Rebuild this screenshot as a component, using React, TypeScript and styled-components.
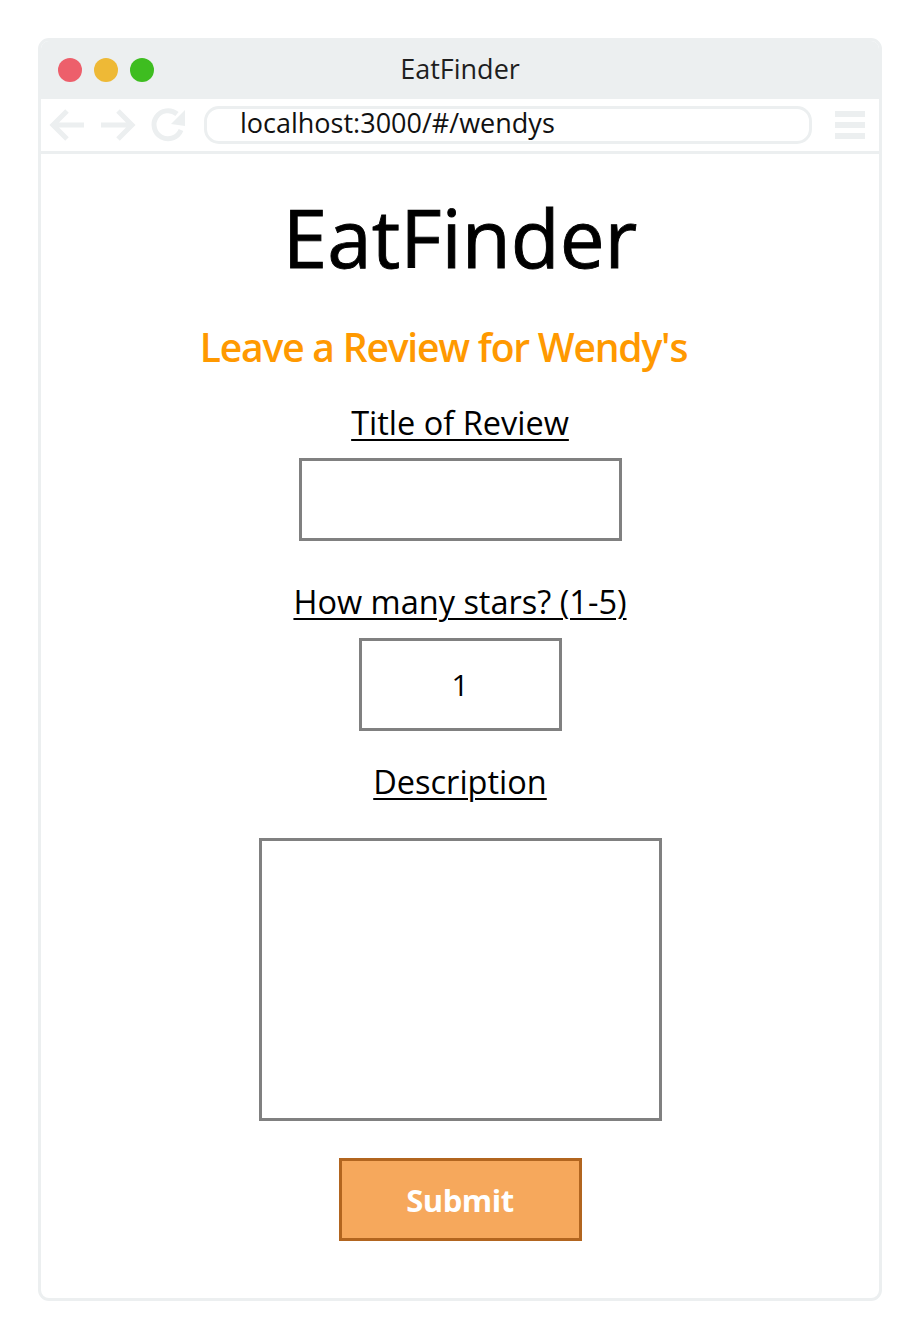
import React from "react";
import styled, { createGlobalStyle } from "styled-components";

const GlobalStyle = createGlobalStyle`
  html, body { margin: 0; padding: 0; background: #ffffff; }
  body { font-family: "Open Sans", "Noto Sans", sans-serif; }
  * { box-sizing: border-box; }
`;

const Page = styled.div`
  padding: 38px 39px 40px 38px;
`;

const Window = styled.div`
  width: 844px;
  height: 1263px;
  border: 3px solid #eceff0;
  border-radius: 11px;
  overflow: hidden;
  display: flex;
  flex-direction: column;
  background: #ffffff;
`;

const TitleBar = styled.div`
  position: relative;
  height: 58px;
  background: #eceff0;
  display: flex;
  align-items: center;
  padding-left: 17px;
  gap: 12px;
`;

const Dot = styled.span<{ $color: string }>`
  width: 24px;
  height: 24px;
  border-radius: 50%;
  background: ${(p) => p.$color};
`;

const WindowTitle = styled.div`
  position: absolute;
  left: 0;
  right: 0;
  top: 0;
  bottom: 4px;
  display: flex;
  align-items: center;
  justify-content: center;
  font-size: 27px;
  color: #1e1e1e;
`;

const Toolbar = styled.div`
  height: 55px;
  border-bottom: 3px solid #eceff0;
  display: flex;
  align-items: center;
  padding-left: 8px;
  padding-right: 14px;
`;

const NavIcon = styled.svg`
  width: 38px;
  height: 38px;
  margin-right: 12px;
  flex: none;
`;

const UrlBar = styled.div`
  margin-left: 5px;
  flex: 1;
  height: 38px;
  border: 3px solid #eceff0;
  border-radius: 15px;
  display: flex;
  align-items: center;
  padding-left: 33px;
  padding-bottom: 5px;
  font-size: 27px;
  color: #111;
`;

const Menu = styled.div`
  margin-left: 23px;
  width: 30px;
  display: flex;
  flex-direction: column;
  gap: 5px;
`;

const MenuBar = styled.span`
  display: block;
  height: 6px;
  background: #eceff0;
`;

const Content = styled.main`
  flex: 1;
  display: flex;
  flex-direction: column;
  align-items: center;
`;

const AppTitle = styled.h1`
  margin: 33px 0 0;
  font-size: 80px;
  line-height: 100px;
  font-weight: 400;
  color: #000;
  -webkit-text-stroke: 0.9px #000;
`;

const SubTitle = styled.h2`
  margin: 35px 0 0;
  padding-right: 33px;
  font-size: 39px;
  line-height: 50px;
  font-weight: 600;
  color: #ff9900;
  letter-spacing: -1.2px;
`;

const Label = styled.label<{ $gap: number }>`
  margin-top: ${(p) => p.$gap}px;
  font-size: 32.5px;
  line-height: 40px;
  text-decoration: underline;
  text-underline-offset: 4px;
  text-decoration-thickness: 2px;
  color: #000;
`;

const Field = styled.input<{ $w: number; $h: number; $gap: number }>`
  margin-top: ${(p) => p.$gap}px;
  width: ${(p) => p.$w}px;
  height: ${(p) => p.$h}px;
  border: 3px solid #808080;
  font-family: inherit;
  font-size: 30px;
  text-align: center;
  color: #000;
  background: #fff;
  outline: none;
`;

const Area = styled.textarea`
  display: block;
  margin-top: 36px;
  width: 403px;
  height: 283px;
  border: 3px solid #808080;
  resize: none;
  font-family: inherit;
  background: #fff;
  outline: none;
`;

const SubmitButton = styled.button`
  margin-top: 37px;
  width: 243px;
  height: 83px;
  background: #f6a85c;
  border: 3px solid #b2651f;
  color: #ffffff;
  font-family: inherit;
  font-size: 31px;
  font-weight: 700;
  letter-spacing: -0.5px;
`;

const iconColor = "#eceff0";

export default function App() {
  return (
    <>
      <GlobalStyle />
      <Page>
        <Window>
          <TitleBar>
            <Dot $color="#ed5f6b" />
            <Dot $color="#eeb936" />
            <Dot $color="#3ebd20" />
            <WindowTitle>EatFinder</WindowTitle>
          </TitleBar>
          <Toolbar>
            <NavIcon viewBox="0 0 38 38">
              <path
                d="M35 19 H5 M18 5 L4 19 L18 33"
                fill="none"
                stroke={iconColor}
                strokeWidth="5"
              />
            </NavIcon>
            <NavIcon viewBox="0 0 38 38">
              <path
                d="M2 19 H32 M19 5 L33 19 L19 33"
                fill="none"
                stroke={iconColor}
                strokeWidth="5"
              />
            </NavIcon>
            <NavIcon viewBox="0 0 38 38">
              <path
                d="M28 8 A14 14 0 1 0 32 24"
                fill="none"
                stroke={iconColor}
                strokeWidth="5"
              />
              <path d="M36 4 L36 20 L22 18 Z" fill={iconColor} />
            </NavIcon>
            <UrlBar>localhost:3000/#/wendys</UrlBar>
            <Menu>
              <MenuBar />
              <MenuBar />
              <MenuBar />
            </Menu>
          </Toolbar>
          <Content>
            <AppTitle>EatFinder</AppTitle>
            <SubTitle>Leave a Review for Wendy's</SubTitle>
            <Label $gap={31} htmlFor="title">Title of Review</Label>
            <Field id="title" type="text" $w={323} $h={83} $gap={15} />
            <Label $gap={41} htmlFor="stars">How many stars? (1-5)</Label>
            <Field id="stars" type="text" defaultValue="1" $w={203} $h={93} $gap={16} />
            <Label $gap={31} htmlFor="desc">Description</Label>
            <Area id="desc" />
            <SubmitButton type="button">Submit</SubmitButton>
          </Content>
        </Window>
      </Page>
    </>
  );
}
